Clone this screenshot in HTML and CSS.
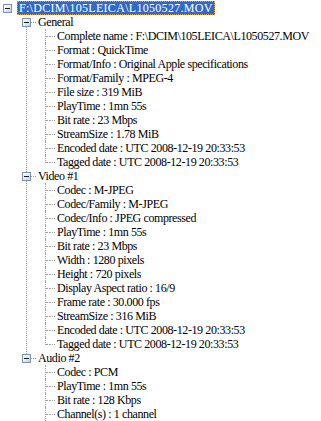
FILE: index.html
```html
<!DOCTYPE html>
<html>
<head>
<meta charset="utf-8">
<link rel="stylesheet" href="styles.css">
</head>
<body>
<div class="tree">
  <div class="row lv0">
    <span class="glyph box"></span><span class="conn blank"></span><span class="label sel">F:\DCIM\105LEICA\L1050527.MOV</span>
  </div>
  <ul class="branch lv1">
    <li class="item">
      <div class="row"><span class="glyph box"></span><span class="conn"></span><span class="label">General</span></div>
      <ul class="branch lv2">
        <li class="item"><div class="row"><span class="glyph leaf"></span><span class="conn"></span><span class="label">Complete name : F:\DCIM\105LEICA\L1050527.MOV</span></div></li>
        <li class="item"><div class="row"><span class="glyph leaf"></span><span class="conn"></span><span class="label">Format : QuickTime</span></div></li>
        <li class="item"><div class="row"><span class="glyph leaf"></span><span class="conn"></span><span class="label">Format/Info : Original Apple specifications</span></div></li>
        <li class="item"><div class="row"><span class="glyph leaf"></span><span class="conn"></span><span class="label">Format/Family : MPEG-4</span></div></li>
        <li class="item"><div class="row"><span class="glyph leaf"></span><span class="conn"></span><span class="label">File size : 319 MiB</span></div></li>
        <li class="item"><div class="row"><span class="glyph leaf"></span><span class="conn"></span><span class="label">PlayTime : 1mn 55s</span></div></li>
        <li class="item"><div class="row"><span class="glyph leaf"></span><span class="conn"></span><span class="label">Bit rate : 23 Mbps</span></div></li>
        <li class="item"><div class="row"><span class="glyph leaf"></span><span class="conn"></span><span class="label">StreamSize : 1.78 MiB</span></div></li>
        <li class="item"><div class="row"><span class="glyph leaf"></span><span class="conn"></span><span class="label">Encoded date : UTC 2008-12-19 20:33:53</span></div></li>
        <li class="item"><div class="row"><span class="glyph leaf"></span><span class="conn"></span><span class="label">Tagged date : UTC 2008-12-19 20:33:53</span></div></li>
      </ul>
    </li>
    <li class="item">
      <div class="row"><span class="glyph box"></span><span class="conn"></span><span class="label">Video #1</span></div>
      <ul class="branch lv2">
        <li class="item"><div class="row"><span class="glyph leaf"></span><span class="conn"></span><span class="label">Codec : M-JPEG</span></div></li>
        <li class="item"><div class="row"><span class="glyph leaf"></span><span class="conn"></span><span class="label">Codec/Family : M-JPEG</span></div></li>
        <li class="item"><div class="row"><span class="glyph leaf"></span><span class="conn"></span><span class="label">Codec/Info : JPEG compressed</span></div></li>
        <li class="item"><div class="row"><span class="glyph leaf"></span><span class="conn"></span><span class="label">PlayTime : 1mn 55s</span></div></li>
        <li class="item"><div class="row"><span class="glyph leaf"></span><span class="conn"></span><span class="label">Bit rate : 23 Mbps</span></div></li>
        <li class="item"><div class="row"><span class="glyph leaf"></span><span class="conn"></span><span class="label">Width : 1280 pixels</span></div></li>
        <li class="item"><div class="row"><span class="glyph leaf"></span><span class="conn"></span><span class="label">Height : 720 pixels</span></div></li>
        <li class="item"><div class="row"><span class="glyph leaf"></span><span class="conn"></span><span class="label">Display Aspect ratio : 16/9</span></div></li>
        <li class="item"><div class="row"><span class="glyph leaf"></span><span class="conn"></span><span class="label">Frame rate : 30.000 fps</span></div></li>
        <li class="item"><div class="row"><span class="glyph leaf"></span><span class="conn"></span><span class="label">StreamSize : 316 MiB</span></div></li>
        <li class="item"><div class="row"><span class="glyph leaf"></span><span class="conn"></span><span class="label">Encoded date : UTC 2008-12-19 20:33:53</span></div></li>
        <li class="item"><div class="row"><span class="glyph leaf"></span><span class="conn"></span><span class="label">Tagged date : UTC 2008-12-19 20:33:53</span></div></li>
      </ul>
    </li>
    <li class="item">
      <div class="row"><span class="glyph box"></span><span class="conn"></span><span class="label">Audio #2</span></div>
      <ul class="branch lv2 open-end">
        <li class="item"><div class="row"><span class="glyph leaf"></span><span class="conn"></span><span class="label">Codec : PCM</span></div></li>
        <li class="item"><div class="row"><span class="glyph leaf"></span><span class="conn"></span><span class="label">PlayTime : 1mn 55s</span></div></li>
        <li class="item"><div class="row"><span class="glyph leaf"></span><span class="conn"></span><span class="label">Bit rate : 128 Kbps</span></div></li>
        <li class="item"><div class="row"><span class="glyph leaf"></span><span class="conn"></span><span class="label">Channel(s) : 1 channel</span></div></li>
      </ul>
    </li>
  </ul>
</div>
</body>
</html>
```

FILE: styles.css
```css
html, body {
  margin: 0;
  padding: 0;
  background: #ffffff;
  overflow: hidden;
}

.tree {
  padding-top: 1px;
  font-family: "Liberation Serif", "Times New Roman", serif;
  font-size: 12px;
  color: #000000;
  white-space: nowrap;
  height: 420px;
  overflow: hidden;
}

.branch {
  list-style: none;
  margin: 0;
  padding: 0;
}

.item {
  position: relative;
}

.row {
  display: flex;
  align-items: center;
  height: 14px;
  padding-left: 3px;
}

.lv1 > .item > .row { padding-left: 22px; }
.lv2 > .item > .row { padding-left: 41px; }

/* vertical connector lines */
.lv1 > .item::before {
  content: "";
  position: absolute;
  left: 26px;
  top: 7px;
  bottom: -7px;
  border-left: 1px dotted #a0a0a0;
}
.lv1 > .item:last-child::before {
  bottom: auto;
  height: 0;
}

.lv2 > .item::before {
  content: "";
  position: absolute;
  left: 45px;
  top: 0;
  bottom: 0;
  border-left: 1px dotted #a0a0a0;
}
.lv2 > .item:last-child::before {
  bottom: auto;
  height: 8px;
}
.lv2.open-end > .item:last-child::before {
  bottom: -8px;
  height: auto;
}

.glyph {
  position: relative;
  flex: 0 0 9px;
  width: 9px;
  height: 14px;
  box-sizing: border-box;
}

.glyph.box {
  height: 9px;
  border: 1px solid #7a95b0;
  background: linear-gradient(135deg, #ffffff 0%, #e6ebf0 50%, #c4ceda 100%);
  z-index: 1;
}
.glyph.box::after {
  content: "";
  position: absolute;
  left: 1px;
  top: 3px;
  width: 5px;
  height: 1px;
  background: #1a1a1a;
}

.glyph.leaf::after {
  content: "";
  position: absolute;
  left: 5px;
  right: 0;
  top: 7px;
  border-top: 1px dotted #a0a0a0;
}

.conn {
  position: relative;
  flex: 0 0 5px;
  height: 14px;
}
.conn::after {
  content: "";
  position: absolute;
  left: 0;
  right: 0;
  top: 7px;
  border-top: 1px dotted #a0a0a0;
}
.conn.blank::after {
  display: none;
}

.label {
  padding: 0 2px;
  line-height: 14px;
  height: 14px;
  letter-spacing: -0.4px;
}

.label.sel {
  background: #316ac5;
  color: #ffffff;
  letter-spacing: 0.3px;
  outline: 1px dotted #e0a040;
  outline-offset: -1px;
}
```
